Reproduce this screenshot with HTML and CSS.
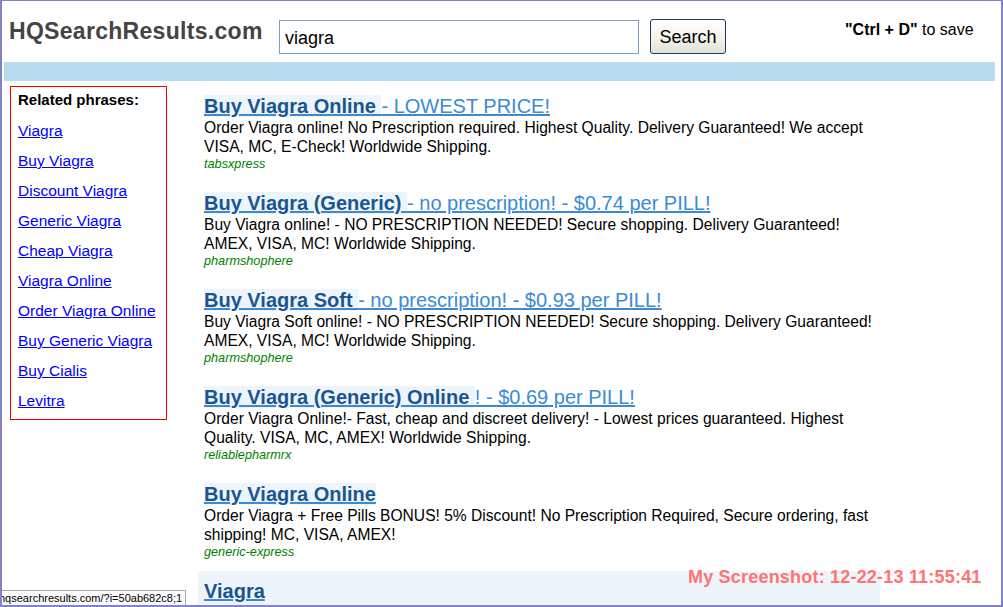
FILE: index.html
```html
<!DOCTYPE html>
<html>
<head>
<meta charset="utf-8">
<title>HQSearchResults.com - viagra</title>
<link rel="stylesheet" href="styles.css">
</head>
<body>
<div class="frame">
  <header class="header">
    <div class="logo">HQSearchResults.com</div>
    <form class="search">
      <input class="search-input" type="text" value="viagra">
      <button class="search-btn" type="button">Search</button>
    </form>
    <div class="save"><b>"Ctrl + D"</b> to save</div>
  </header>
  <div class="bar"></div>
  <div class="main">
    <aside class="related">
      <div class="related-title">Related phrases:</div>
      <a href="#">Viagra</a>
      <a href="#">Buy Viagra</a>
      <a href="#">Discount Viagra</a>
      <a href="#">Generic Viagra</a>
      <a href="#">Cheap Viagra</a>
      <a href="#">Viagra Online</a>
      <a href="#">Order Viagra Online</a>
      <a href="#">Buy Generic Viagra</a>
      <a href="#">Buy Cialis</a>
      <a href="#">Levitra</a>
    </aside>
    <section class="results">
      <div class="result">
        <a class="title" href="#"><b>Buy Viagra Online </b>- LOWEST PRICE!</a>
        <p class="desc">Order Viagra online! No Prescription required. Highest Quality. Delivery Guaranteed! We accept VISA, MC, E-Check! Worldwide Shipping.</p>
        <div class="src">tabsxpress</div>
      </div>
      <div class="result">
        <a class="title" href="#"><b>Buy Viagra (Generic) </b>- no prescription! - $0.74 per PILL!</a>
        <p class="desc">Buy Viagra online! - NO PRESCRIPTION NEEDED! Secure shopping. Delivery Guaranteed! AMEX, VISA, MC! Worldwide Shipping.</p>
        <div class="src">pharmshophere</div>
      </div>
      <div class="result">
        <a class="title" href="#"><b>Buy Viagra Soft </b>- no prescription! - $0.93 per PILL!</a>
        <p class="desc">Buy Viagra Soft online! - NO PRESCRIPTION NEEDED! Secure shopping. Delivery Guaranteed! AMEX, VISA, MC! Worldwide Shipping.</p>
        <div class="src">pharmshophere</div>
      </div>
      <div class="result">
        <a class="title" href="#"><b>Buy Viagra (Generic) Online </b>! - $0.69 per PILL!</a>
        <p class="desc">Order Viagra Online!- Fast, cheap and discreet delivery! - Lowest prices guaranteed. Highest Quality. VISA, MC, AMEX! Worldwide Shipping.</p>
        <div class="src">reliablepharmrx</div>
      </div>
      <div class="result">
        <a class="title" href="#"><b>Buy Viagra Online</b></a>
        <p class="desc">Order Viagra + Free Pills BONUS! 5% Discount! No Prescription Required, Secure ordering, fast shipping! MC, VISA, AMEX!</p>
        <div class="src">generic-express</div>
      </div>
      <div class="result result-hover">
        <a class="title" href="#"><b>Viagra</b></a>
        <p class="desc">Buy Viagra online. Lowest prices. Worldwide Shipping.</p>
        <div class="src">pharmacy</div>
      </div>
    </section>
  </div>
  <div class="status">hqsearchresults.com/?i=50ab682c8;1</div>
  <div class="stamp">My Screenshot: 12-22-13 11:55:41</div>
</div>
</body>
</html>
```
FILE: styles.css
```css
html, body {
  margin: 0;
  padding: 0;
  background: #ffffff;
}
body {
  font-family: "Liberation Sans", Arial, sans-serif;
  color: #000;
}
.frame {
  position: relative;
  width: 1003px;
  height: 607px;
  box-sizing: border-box;
  border-style: solid;
  border-color: #8282c6;
  border-width: 1px 2px 2px 2px;
  overflow: hidden;
  background: #fff;
}
.header {
  display: flex;
  align-items: flex-start;
  height: 61px;
  padding-left: 7px;
}
.logo {
  margin-top: 16px;
  width: 270px;
  font-size: 23px;
  line-height: 28px;
  font-weight: bold;
  letter-spacing: 0.3px;
  color: #444444;
  white-space: nowrap;
}
.search {
  display: flex;
  align-items: flex-start;
  margin: 0;
}
.search-input {
  margin: 19px 0 0 0;
  width: 360px;
  height: 34px;
  box-sizing: border-box;
  border: 1px solid #7f9db9;
  padding: 2px 0 0 5px;
  font-family: "Liberation Sans", Arial, sans-serif;
  font-size: 18px;
  color: #000;
  outline: none;
}
.search-btn {
  margin: 18px 0 0 11px;
  width: 76px;
  height: 35px;
  box-sizing: border-box;
  border: 1px solid #1d3b5d;
  border-radius: 3px;
  background: linear-gradient(#ffffff, #f2f1ea 60%, #e3e1d6);
  font-family: "Liberation Sans", Arial, sans-serif;
  font-size: 18px;
  color: #000;
  padding: 2px 0 0 0;
}
.save {
  margin: 19px 0 0 119px;
  font-size: 16px;
  line-height: 20px;
  color: #000;
  white-space: nowrap;
}
.save b {
  font-weight: bold;
}
.bar {
  margin: 0 6px 0 2px;
  height: 19px;
  background: #b8dbf0;
}
.main {
  display: flex;
  align-items: flex-start;
  padding: 5px 0 0 8px;
}
.related {
  border: 1px solid #ee0000;
  padding: 3px 0 3px 7px;
  box-sizing: border-box;
  width: 157px;
  display: flex;
  flex-direction: column;
  align-items: flex-start;
}
.related-title {
  font-size: 15px;
  line-height: 20px;
  font-weight: bold;
  margin-bottom: 6px;
}
.related a {
  font-size: 15.5px;
  line-height: 30px;
  color: #0000ff;
  text-decoration: underline;
}
.results {
  margin-left: 31px;
  width: 682px;
}
.result {
  padding: 8px 4px 11px 6px;
  height: 97px;
  box-sizing: border-box;
}
.result-hover {
  background: #eef5fa;
}
.title {
  display: block;
  font-size: 20px;
  line-height: 24px;
  color: #3a8ad6;
  text-decoration: underline;
  white-space: nowrap;
}
.title b {
  color: #1a5592;
  background: #eef5fa;
}
.desc {
  margin: 0;
  font-size: 15.6px;
  line-height: 19px;
  color: #000;
}
.src {
  font-size: 12.7px;
  line-height: 16px;
  font-style: italic;
  color: #008000;
}
.status {
  position: absolute;
  left: 0;
  top: 589px;
  width: 184px;
  height: 16px;
  box-sizing: border-box;
  border-top: 1px solid #a8a8a8;
  border-right: 1px solid #a8a8a8;
  background: #fcfcfc;
  font-size: 11px;
  line-height: 15px;
  color: #000;
  white-space: nowrap;
  overflow: hidden;
  text-indent: -3px;
}
.stamp {
  position: absolute;
  left: 686px;
  top: 566px;
  font-size: 18px;
  line-height: 20px;
  font-weight: bold;
  letter-spacing: 0.2px;
  color: #ff7373;
  white-space: nowrap;
}
```
